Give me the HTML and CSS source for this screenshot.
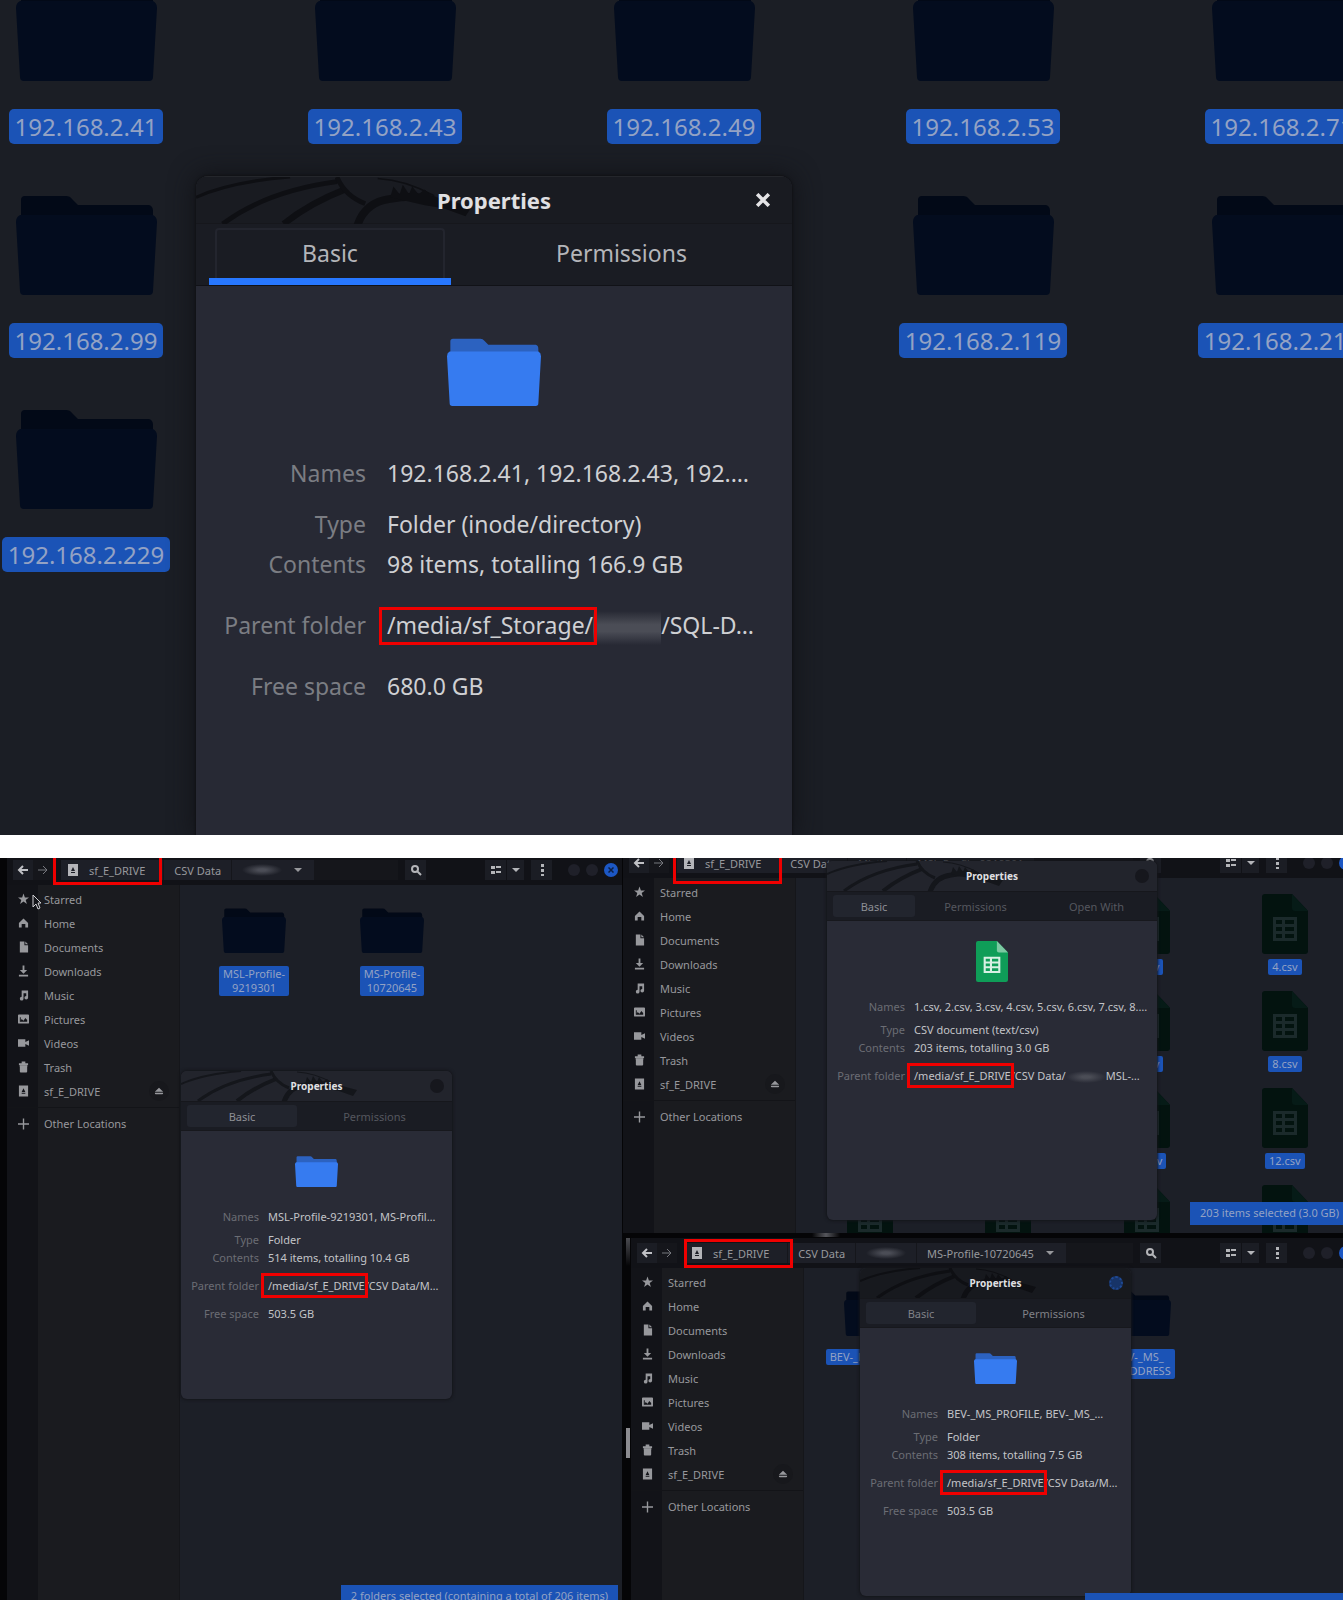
FILE: index.html
```html
<!DOCTYPE html>
<html lang="en">
<head>
<meta charset="utf-8">
<meta name="viewport" content="width=device-width, initial-scale=1">
<title>Properties</title>
<link rel="stylesheet" href="styles.css">
</head>
<body>
<svg class="sprite" aria-hidden="true">
  <symbol id="folder" viewBox="0 0 141 100" preserveAspectRatio="none">
    <path class="folder-back" d="M5 24V5Q5 1 9 1H50Q54 1 56 4L62 10H133Q137 11 137 16V24Z"/>
    <path class="folder-front" d="M4 20H137Q141 22 141 27L137 96Q137 100 133 100H8Q4 100 4 96L0 27Q0 22 4 20Z"/>
  </symbol>
  <symbol id="sheet" viewBox="0 0 46 60" preserveAspectRatio="none">
    <path class="sheet-page" d="M3 0H30L46 17V57Q46 60 43 60H3Q0 60 0 57V3Q0 0 3 0Z"/>
    <path class="sheet-fold" d="M30 0L46 17H33Q30 17 30 14Z"/>
    <path class="sheet-grid" fill-rule="evenodd" d="M11 23H35V47H11ZM14 26V30H20V26ZM23 26V30H32V26ZM14 33V37H20V33ZM23 33V37H32V33ZM14 40V44H20V40ZM23 40V44H32V40Z"/>
  </symbol>
  <symbol id="dragon" viewBox="0 0 180 30">
    <g fill="none" stroke="currentColor">
      <path stroke-width="2" d="M0 13Q22 3 60 0"/>
      <path stroke-width="3" d="M17 30Q45 9 90 3"/>
      <path stroke-width="4" d="M56 30Q72 17 95 8"/>
      <path stroke-width="3" d="M90 0Q95 12 108 17"/>
      <path stroke-width="5" d="M103 31Q108 16 124 14Q140 11 152 15"/>
      <path stroke-width="1" d="M116 1Q134 2 152 12"/>
    </g>
    <path fill="currentColor" d="M124 13L126 6L130 11L132 5L136 11L138 6L142 11L146 8L150 12L176 19L172 25L158 20L146 18Z"/>
  </symbol>
  <symbol id="back" viewBox="0 0 12 12"><path d="M11 6H2M6 2L2 6L6 10" fill="none" stroke="currentColor" stroke-width="2"/></symbol>
  <symbol id="forward" viewBox="0 0 12 12"><path d="M1 6H10M6 2L10 6L6 10" fill="none" stroke="currentColor" stroke-width="1"/></symbol>
  <symbol id="caret" viewBox="0 0 12 12"><path d="M2 4H10L6 8Z" fill="currentColor"/></symbol>
  <symbol id="search" viewBox="0 0 12 12"><path d="M7 7L11 11M8 5A3 3 0 1 1 2 5A3 3 0 1 1 8 5Z" fill="none" stroke="currentColor" stroke-width="2"/></symbol>
  <symbol id="listview" viewBox="0 0 12 12"><path d="M1 2H5V5H1ZM1 7H5V10H1ZM6 2H11V4H6ZM6 7H11V9H6Z" fill="currentColor"/></symbol>
  <symbol id="dots" viewBox="0 0 12 12"><path d="M5 0H8V3H5ZM5 5H8V8H5ZM5 10H8V12H5Z" fill="currentColor"/></symbol>
  <symbol id="cross" viewBox="0 0 12 12"><path d="M1 1L11 11M11 1L1 11" fill="none" stroke="currentColor" stroke-width="3"/></symbol>
  <symbol id="star" viewBox="0 0 12 12"><path d="M6 0L7.5 4.3H12L8.400 7L9.700 11.500L6 8.800L2.300 11.500L3.600 7L0 4.300H4.500Z" fill="currentColor"/></symbol>
  <symbol id="home" viewBox="0 0 12 12"><path d="M6 1L11 6V11H8V7H4V11H1V6Z" fill="currentColor"/></symbol>
  <symbol id="document" viewBox="0 0 12 12"><path d="M2 0H7V4H11V12H2ZM8 0L11 3H8Z" fill="currentColor"/></symbol>
  <symbol id="download" viewBox="0 0 12 12"><path d="M5 0H7V5H10L6 9L2 5H5ZM1 10H11V12H1Z" fill="currentColor"/></symbol>
  <symbol id="music" viewBox="0 0 12 12"><path d="M4 1H11V9A2 2 0 1 1 9 7V4H6V10A2 2 0 1 1 4 8Z" fill="currentColor"/></symbol>
  <symbol id="picture" viewBox="0 0 12 12"><path fill-rule="evenodd" d="M1 1H11Q12 1 12 2V10Q12 11 11 11H1Q0 11 0 10V2Q0 1 1 1ZM2 4V9H10V7L8 5L6 8L4 6L3 8V4Z" fill="currentColor"/></symbol>
  <symbol id="video" viewBox="0 0 12 12"><path d="M0 2H8V5L12 3V9L8 7V10H0Z" fill="currentColor"/></symbol>
  <symbol id="trash" viewBox="0 0 12 12"><path d="M1 2H4V0H8V2H11V4H1ZM2 5H10V11Q10 12 9 12H3Q2 12 2 11Z" fill="currentColor"/><path d="M2 4H10V6H2Z" fill="currentColor"/></symbol>
  <symbol id="drive" viewBox="0 0 12 12"><path fill-rule="evenodd" d="M1 0H11V12H1ZM4 8V9H8V8ZM4 7H8L6 3Z" fill="currentColor"/></symbol>
  <symbol id="plus" viewBox="0 0 12 12"><path d="M6 0V12M0 6H12" fill="none" stroke="currentColor" stroke-width="1.500"/></symbol>
  <symbol id="eject" viewBox="0 0 12 12"><path d="M6 2L11 7H1ZM1 8H11V10H1Z" fill="currentColor"/></symbol>
</svg>

<main class="page">
<section class="desk" aria-label="Storage folders">
  <ul class="hosts">
    <li class="host"><svg class="host-folder"><use href="#folder"/></svg><span class="tag">192.168.2.41</span></li>
    <li class="host"><svg class="host-folder"><use href="#folder"/></svg><span class="tag">192.168.2.43</span></li>
    <li class="host"><svg class="host-folder"><use href="#folder"/></svg><span class="tag">192.168.2.49</span></li>
    <li class="host"><svg class="host-folder"><use href="#folder"/></svg><span class="tag">192.168.2.53</span></li>
    <li class="host"><svg class="host-folder"><use href="#folder"/></svg><span class="tag">192.168.2.71</span></li>
    <li class="host"><svg class="host-folder"><use href="#folder"/></svg><span class="tag">192.168.2.99</span></li>
    <li class="host host--fourth"><svg class="host-folder"><use href="#folder"/></svg><span class="tag">192.168.2.119</span></li>
    <li class="host"><svg class="host-folder"><use href="#folder"/></svg><span class="tag">192.168.2.211</span></li>
    <li class="host"><svg class="host-folder"><use href="#folder"/></svg><span class="tag">192.168.2.229</span></li>
  </ul>
  <article class="dialog dialog--large">
    <header class="dialog-head"><svg class="dragon"><use href="#dragon"/></svg><h2>Properties</h2><button class="dialog-close" aria-label="Close"><svg><use href="#cross"/></svg></button></header>
    <nav class="tabs"><button class="tab tab--on">Basic</button><button class="tab">Permissions</button></nav>
    <div class="dialog-body">
      <svg class="dialog-icon dialog-icon--folder"><use href="#folder"/></svg>
      <dl class="props">
        <div class="row"><dt>Names</dt><dd>192.168.2.41, 192.168.2.43, 192.…</dd></div>
        <div class="row row--type"><dt>Type</dt><dd>Folder (inode/directory)</dd></div>
        <div class="row"><dt>Contents</dt><dd>98 items, totalling 166.9 GB</dd></div>
        <div class="row row--apart"><dt>Parent folder</dt><dd><span class="marked">/media/sf_Storage/</span><span class="smudge"></span>/SQL-D…</dd></div>
        <div class="row row--apart"><dt>Free space</dt><dd>680.0 GB</dd></div>
      </dl>
    </div>
  </article>
</section>

<section class="captures">
  <div class="left">
    <article class="window window--left">
      <header class="bar">
        <button class="nav" aria-label="Back"><svg><use href="#back"/></svg></button><button class="nav nav--off" aria-label="Forward"><svg><use href="#forward"/></svg></button>
        <div class="path"><button class="crumb crumb--drive"><svg><use href="#drive"/></svg>sf_E_DRIVE</button><button class="crumb">CSV Data</button><button class="crumb crumb--last" aria-label="Folder"><span class="smudge"></span><svg><use href="#caret"/></svg></button></div>
        <button class="tool tool--search" aria-label="Search"><svg><use href="#search"/></svg></button>
        <button class="tool" aria-label="View"><svg><use href="#listview"/></svg></button><button class="tool tool--caret" aria-label="View options"><svg><use href="#caret"/></svg></button><button class="tool tool--menu" aria-label="Menu"><svg><use href="#dots"/></svg></button>
        <button class="dot" aria-label="Minimise"></button><button class="dot" aria-label="Maximise"></button><button class="dot dot--close" aria-label="Close"><svg><use href="#cross"/></svg></button>
        <span class="frame"></span>
      </header>
      <div class="split">
        <ul class="places">
          <li><svg><use href="#star"/></svg>Starred</li>
          <li><svg><use href="#home"/></svg>Home</li>
          <li><svg><use href="#document"/></svg>Documents</li>
          <li><svg><use href="#download"/></svg>Downloads</li>
          <li><svg><use href="#music"/></svg>Music</li>
          <li><svg><use href="#picture"/></svg>Pictures</li>
          <li><svg><use href="#video"/></svg>Videos</li>
          <li><svg><use href="#trash"/></svg>Trash</li>
          <li><svg><use href="#drive"/></svg>sf_E_DRIVE<svg class="eject"><use href="#eject"/></svg></li>
          <li class="other"><svg><use href="#plus"/></svg>Other Locations</li>
        </ul>
        <div class="files">
          <ul class="folders">
            <li><svg class="small-folder"><use href="#folder"/></svg><span class="tag">MSL-Profile-<br>9219301</span></li>
            <li><svg class="small-folder"><use href="#folder"/></svg><span class="tag">MS-Profile-<br>10720645</span></li>
          </ul>
          <article class="dialog dialog--msl">
            <header class="dialog-head"><svg class="dragon"><use href="#dragon"/></svg><h2>Properties</h2><button class="dialog-close" aria-label="Close"></button></header>
            <nav class="tabs"><button class="tab tab--on">Basic</button><button class="tab">Permissions</button></nav>
            <div class="dialog-body">
              <svg class="dialog-icon dialog-icon--folder"><use href="#folder"/></svg>
              <dl class="props">
                <div class="row"><dt>Names</dt><dd>MSL-Profile-9219301, MS-Profil…</dd></div>
                <div class="row row--type"><dt>Type</dt><dd>Folder</dd></div>
                <div class="row"><dt>Contents</dt><dd>514 items, totalling 10.4 GB</dd></div>
                <div class="row row--apart"><dt>Parent folder</dt><dd><span class="marked">/media/sf_E_DRIVE</span>/CSV Data/M…</dd></div>
                <div class="row row--apart"><dt>Free space</dt><dd>503.5 GB</dd></div>
              </dl>
            </div>
          </article>
          <p class="status">2 folders selected (containing a total of 206 items)</p>
        </div>
      </div>
      <svg class="pointer" viewBox="0 0 10 16"><path d="M1 1V13L4 10L6 15L8 14L6 9H9Z" fill="#14151a" stroke="#d0d0d4" stroke-width="1"/></svg>
    </article>
  </div>

  <div class="right">
    <div class="slot">
    <article class="window window--csv">
      <header class="bar">
        <button class="nav" aria-label="Back"><svg><use href="#back"/></svg></button><button class="nav nav--off" aria-label="Forward"><svg><use href="#forward"/></svg></button>
        <div class="path"><button class="crumb crumb--drive"><svg><use href="#drive"/></svg>sf_E_DRIVE</button><button class="crumb">CSV Data</button><button class="crumb">Mistino</button><button class="crumb">MSL-Profile-9219301</button></div>
        <button class="tool tool--search" aria-label="Search"><svg><use href="#search"/></svg></button>
        <button class="tool" aria-label="View"><svg><use href="#listview"/></svg></button><button class="tool tool--caret" aria-label="View options"><svg><use href="#caret"/></svg></button><button class="tool tool--menu" aria-label="Menu"><svg><use href="#dots"/></svg></button>
        <button class="dot" aria-label="Minimise"></button><button class="dot" aria-label="Maximise"></button><button class="dot dot--close" aria-label="Close"><svg><use href="#cross"/></svg></button>
        <span class="frame"></span>
      </header>
      <div class="split">
        <ul class="places">
          <li><svg><use href="#star"/></svg>Starred</li>
          <li><svg><use href="#home"/></svg>Home</li>
          <li><svg><use href="#document"/></svg>Documents</li>
          <li><svg><use href="#download"/></svg>Downloads</li>
          <li><svg><use href="#music"/></svg>Music</li>
          <li><svg><use href="#picture"/></svg>Pictures</li>
          <li><svg><use href="#video"/></svg>Videos</li>
          <li><svg><use href="#trash"/></svg>Trash</li>
          <li><svg><use href="#drive"/></svg>sf_E_DRIVE<svg class="eject"><use href="#eject"/></svg></li>
          <li class="other"><svg><use href="#plus"/></svg>Other Locations</li>
        </ul>
        <div class="files">
          <ul class="sheets">
            <li><svg><use href="#sheet"/></svg><span class="tag">1.csv</span></li>
            <li><svg><use href="#sheet"/></svg><span class="tag">2.csv</span></li>
            <li><svg><use href="#sheet"/></svg><span class="tag">3.csv</span></li>
            <li><svg><use href="#sheet"/></svg><span class="tag">4.csv</span></li>
            <li><svg><use href="#sheet"/></svg><span class="tag">5.csv</span></li>
            <li><svg><use href="#sheet"/></svg><span class="tag">6.csv</span></li>
            <li><svg><use href="#sheet"/></svg><span class="tag">7.csv</span></li>
            <li><svg><use href="#sheet"/></svg><span class="tag">8.csv</span></li>
            <li><svg><use href="#sheet"/></svg><span class="tag">9.csv</span></li>
            <li><svg><use href="#sheet"/></svg><span class="tag">10.csv</span></li>
            <li><svg><use href="#sheet"/></svg><span class="tag">11.csv</span></li>
            <li><svg><use href="#sheet"/></svg><span class="tag">12.csv</span></li>
            <li><svg><use href="#sheet"/></svg></li>
            <li><svg><use href="#sheet"/></svg></li>
            <li><svg><use href="#sheet"/></svg></li>
            <li><svg><use href="#sheet"/></svg></li>
          </ul>
          <p class="status">203 items selected (3.0 GB)</p>
        </div>
      </div>
      <article class="dialog dialog--csv">
        <header class="dialog-head"><svg class="dragon"><use href="#dragon"/></svg><h2>Properties</h2><button class="dialog-close" aria-label="Close"></button></header>
        <nav class="tabs"><button class="tab tab--on">Basic</button><button class="tab">Permissions</button><button class="tab">Open With</button></nav>
        <div class="dialog-body">
          <svg class="dialog-icon dialog-icon--sheet"><use href="#sheet"/></svg>
          <dl class="props">
            <div class="row"><dt>Names</dt><dd>1.csv, 2.csv, 3.csv, 4.csv, 5.csv, 6.csv, 7.csv, 8.…</dd></div>
            <div class="row row--type"><dt>Type</dt><dd>CSV document (text/csv)</dd></div>
            <div class="row"><dt>Contents</dt><dd>203 items, totalling 3.0 GB</dd></div>
            <div class="row row--apart"><dt>Parent folder</dt><dd><span class="marked">/media/sf_E_DRIVE</span>/CSV Data/<span class="smudge"></span>MSL-…</dd></div>
          </dl>
        </div>
      </article>
    </article>
    </div>

    <div class="slot slot--lower">
    <article class="window window--bev">
      <header class="bar">
        <button class="nav" aria-label="Back"><svg><use href="#back"/></svg></button><button class="nav nav--off" aria-label="Forward"><svg><use href="#forward"/></svg></button>
        <div class="path"><button class="crumb crumb--drive"><svg><use href="#drive"/></svg>sf_E_DRIVE</button><button class="crumb">CSV Data</button><button class="crumb crumb--hidden" aria-label="Folder"><span class="smudge"></span></button><button class="crumb crumb--last">MS-Profile-10720645<svg><use href="#caret"/></svg></button></div>
        <button class="tool tool--search" aria-label="Search"><svg><use href="#search"/></svg></button>
        <button class="tool" aria-label="View"><svg><use href="#listview"/></svg></button><button class="tool tool--caret" aria-label="View options"><svg><use href="#caret"/></svg></button><button class="tool tool--menu" aria-label="Menu"><svg><use href="#dots"/></svg></button>
        <button class="dot" aria-label="Minimise"></button><button class="dot" aria-label="Maximise"></button><button class="dot dot--close" aria-label="Close"><svg><use href="#cross"/></svg></button>
        <span class="frame"></span>
      </header>
      <div class="split">
        <ul class="places">
          <li><svg><use href="#star"/></svg>Starred</li>
          <li><svg><use href="#home"/></svg>Home</li>
          <li><svg><use href="#document"/></svg>Documents</li>
          <li><svg><use href="#download"/></svg>Downloads</li>
          <li><svg><use href="#music"/></svg>Music</li>
          <li><svg><use href="#picture"/></svg>Pictures</li>
          <li><svg><use href="#video"/></svg>Videos</li>
          <li><svg><use href="#trash"/></svg>Trash</li>
          <li><svg><use href="#drive"/></svg>sf_E_DRIVE<svg class="eject"><use href="#eject"/></svg></li>
          <li class="other"><svg><use href="#plus"/></svg>Other Locations</li>
        </ul>
        <div class="files">
          <ul class="folders folders--wide">
            <li><svg class="small-folder"><use href="#folder"/></svg><span class="tag">BEV-_MS_PROFILE</span></li>
            <li><svg class="small-folder"><use href="#folder"/></svg><span class="tag">BEV-_MS_<br>IP_ADDRESS</span></li>
          </ul>
          <article class="dialog dialog--bev">
            <header class="dialog-head"><svg class="dragon"><use href="#dragon"/></svg><h2>Properties</h2><button class="dialog-close" aria-label="Close"></button></header>
            <nav class="tabs"><button class="tab tab--on">Basic</button><button class="tab">Permissions</button></nav>
            <div class="dialog-body">
              <svg class="dialog-icon dialog-icon--folder"><use href="#folder"/></svg>
              <dl class="props">
                <div class="row"><dt>Names</dt><dd>BEV-_MS_PROFILE, BEV-_MS_…</dd></div>
                <div class="row row--type"><dt>Type</dt><dd>Folder</dd></div>
                <div class="row"><dt>Contents</dt><dd>308 items, totalling 7.5 GB</dd></div>
                <div class="row row--apart"><dt>Parent folder</dt><dd><span class="marked">/media/sf_E_DRIVE</span>/CSV Data/M…</dd></div>
                <div class="row row--apart"><dt>Free space</dt><dd>503.5 GB</dd></div>
              </dl>
            </div>
          </article>
          <p class="status status--bare"></p>
        </div>
      </div>
    </article>
    </div>
  </div>
</section>
</main>
</body>
</html>
```
FILE: styles.css
```css
* { box-sizing: border-box; }

body {
  margin: 0;
  background: #fff;
  color: #97989c;
  font-family: "Noto Sans", "Open Sans", sans-serif;
  font-size: 11px;
}

ul, dl, dd, h2, p { margin: 0; padding: 0; }
ul { list-style: none; }
button { padding: 0; border: 0; background: none; color: inherit; font: inherit; }
svg { display: block; flex: none; }

.sprite { position: absolute; width: 0; height: 0; }

.page {
  display: flex;
  flex-direction: column;
  gap: 23px;
  min-height: 100vh;
}

.folder-back { fill: var(--folder-back, #020917); }
.folder-front { fill: var(--folder-front, #030c1e); }
.sheet-page { fill: var(--sheet, #03130f); }
.sheet-fold { fill: var(--sheet-fold, #061b17); }
.sheet-grid { fill: var(--sheet-grid, #1b2a2b); }

.tag {
  border-radius: 2px;
  background: #1b53b6;
  color: #93a2c4;
  text-align: center;
  white-space: nowrap;
}

/* Storage desk */

.desk {
  display: grid;
  overflow: hidden;
  background: #1b1e25;
}

.hosts {
  grid-area: 1 / 1;
  display: grid;
  grid-template-columns: repeat(4, minmax(172px, 1fr)) 147px;
  grid-auto-rows: 214px;
  align-content: start;
  margin-top: -19px;
}

.host {
  display: flex;
  flex-direction: column;
  align-items: center;
  gap: 28px;
  width: 172px;
}
.host--fourth { grid-column: 4; }
.host-folder { width: 141px; height: 100px; }
.host .tag {
  padding: 0 6px;
  border-radius: 5px;
  font-size: 24px;
  line-height: 35px;
}

/* Properties dialog */

.dialog {
  --row: 18px;
  display: flex;
  flex-direction: column;
  overflow: hidden;
  width: 271px;
  height: 328px;
  border-radius: 6px;
  background: #292b36;
  box-shadow: 0 0 3px 1px #14151a;
}

.dialog-head {
  position: relative;
  display: flex;
  align-items: center;
  justify-content: center;
  height: 31px;
  border-bottom: 1px solid #16171c;
  background: #22242c;
}
.dialog-head h2 {
  position: relative;
  color: #e0e0e3;
  font-size: 10px;
  font-weight: 700;
}
.dragon {
  position: absolute;
  top: 0;
  left: 0;
  width: 180px;
  height: 30px;
  color: #14161b;
}
.dialog-close {
  position: absolute;
  right: 8px;
  width: 14px;
  height: 14px;
  border-radius: 50%;
  background: #16171d;
}

.tabs {
  display: flex;
  height: 29px;
  padding: 3px 0 3px 6px;
  border-bottom: 1px solid #17181d;
  background: #1a1c23;
}
.tab { flex: 1; color: #55575f; }
.tab--on {
  flex: 0 0 110px;
  border-radius: 3px;
  background: #22252e;
  color: #8e8f95;
}

.dialog-body { padding: 25px 0 0; }
.dialog-icon { margin: 0 auto 21px; }
.dialog-icon--folder {
  --folder-back: #2c62c0;
  --folder-front: #367bf0;
  width: 43px;
  height: 31px;
}
.dialog-icon--sheet {
  --sheet: #0f9d58;
  --sheet-fold: #7cc9a2;
  --sheet-grid: #d8f0e4;
  width: 32px;
  height: 41px;
}

.row {
  display: grid;
  grid-template-columns: 78px 1fr;
  column-gap: 9px;
  line-height: var(--row);
  white-space: nowrap;
}
.row--type { margin-top: 5px; }
.row--apart { margin-top: 10px; }
.row dt { color: #6b6d74; text-align: right; }
.row dd { color: #c3c4c8; }

.marked { position: relative; }
.marked::after {
  content: "";
  position: absolute;
  inset: -5px -3px -5px -7px;
  border: 3px solid #f00000;
}

.smudge {
  display: inline-block;
  width: 40px;
  height: 12px;
  background: radial-gradient(closest-side, #4b4d56 20%, transparent);
  vertical-align: middle;
}

.dialog--large {
  --row: 40px;
  grid-area: 1 / 1;
  width: 596px;
  height: auto;
  margin: 176px 0 0 196px;
  border-radius: 12px 12px 0 0;
  background: #272934;
  box-shadow: 0 0 24px 2px #121317, 0 0 2px 1px #111216;
  font-size: 23px;
  z-index: 1;
}
.dialog--large .dialog-head {
  height: 48px;
  border-top: 1px solid #24262b;
  background: #191b21;
}
.dialog--large h2 { font-size: 22px; }
.dialog--large .dragon { width: 282px; height: 47px; color: #0e0f13; }
.dialog--large .dialog-close {
  right: 22px;
  width: 14px;
  height: 14px;
  background: none;
  color: #e4e4e6;
}
.dialog--large .dialog-close svg { width: 14px; height: 14px; }
.dialog--large .tabs { height: 62px; padding: 4px 0 0 13px; border-bottom: 1px solid #111217; }
.dialog--large .tab { padding-bottom: 8px; color: #b4b5b9; }
.dialog--large .tab--on {
  position: relative;
  flex: 0 0 242px;
  border-radius: 0;
  background: none;
  color: #b4b5b9;
}
.dialog--large .tab--on::before {
  content: "";
  position: absolute;
  inset: 0 6px 7px;
  border: 2px solid #23252e;
  border-bottom: 0;
  border-radius: 4px 4px 0 0;
}
.dialog--large .tab--on::after {
  content: "";
  position: absolute;
  inset: auto 0 0;
  height: 7px;
  background: #2777ff;
}
.dialog--large .dialog-body { padding: 52px 0 129px; }
.dialog--large .dialog-icon { width: 94px; height: 68px; margin-bottom: 47px; }
.dialog--large .row { grid-template-columns: 170px 1fr; column-gap: 21px; }
.dialog--large .row--type { margin-top: 11px; }
.dialog--large .row--apart { margin-top: 21px; }
.dialog--large dt { color: #7b7d83; }
.dialog--large dd { color: #cfd0d3; }
.dialog--large .marked::after { inset: -2px -4px -4px -8px; }
.dialog--large .smudge {
  width: 68px;
  height: 34px;
  background: linear-gradient(transparent, #4b4d56 40%, #4b4d56 60%, transparent);
}

/* File manager captures */

.captures {
  flex: 1;
  display: grid;
  grid-template-columns: minmax(0, 622fr) minmax(0, 721fr);
  overflow: hidden;
  background: #050507;
}

.left { display: flex; overflow: hidden; padding-left: 7px; }
.right { display: grid; grid-template-rows: 375px 1fr; overflow: hidden; }
.slot { display: flex; overflow: hidden; padding-left: 1px; }
.slot--lower {
  padding: 5px 0 0 9px;
  background:
    linear-gradient(#8b8b90, #8b8b90) 4px 195px / 4px 30px no-repeat,
    linear-gradient(#4a4b50, transparent) 4px 5px / 4px 28px no-repeat,
    linear-gradient(90deg, transparent, #55565c, transparent) 190px 0 / 28px 4px no-repeat;
}

.window {
  position: relative;
  display: flex;
  flex: 1;
  flex-direction: column;
  min-width: 0;
}
.window--left { margin-top: -3px; }
.window--csv { margin: -10px -14px 0 0; }
.window--bev { margin-right: -14px; }

.bar {
  position: relative;
  display: flex;
  align-items: center;
  height: 30px;
  padding: 0 4px 0 6px;
  background: #111217;
}
.bar svg { width: 12px; height: 12px; }
.nav {
  display: grid;
  place-items: center;
  width: 20px;
  height: 20px;
  background: #1b1d24;
  color: #c0c1c5;
}
.nav--off { background: #15161b; color: #77787e; }
.path {
  display: flex;
  flex: 1;
  overflow: hidden;
  height: 20px;
  margin: 0 7px 0 8px;
  background: #15161b;
}
.crumb {
  display: flex;
  align-items: center;
  padding: 0 10px;
  border-right: 1px solid #15161b;
  background: #1d1f27;
  white-space: nowrap;
}
.crumb--drive { gap: 10px; padding: 0 18px 0 6px; }
.crumb--drive svg { color: #b4b5b9; }
.crumb--last { gap: 10px; }
.tool {
  display: grid;
  place-items: center;
  width: 21px;
  height: 20px;
  background: #1b1d24;
  color: #b4b5b9;
}
.tool--search { margin-right: 59px; }
.tool--caret { width: 17px; margin-left: 1px; }
.tool--menu { margin: 0 16px 0 7px; }
.dot {
  width: 12px;
  height: 12px;
  margin-right: 6px;
  border-radius: 50%;
  background: #1f2029;
}
.dot--close {
  display: grid;
  place-items: center;
  width: 14px;
  height: 14px;
  margin-right: 0;
  background: #1c57c4;
  color: #0c1f45;
}
.bar .dot--close svg { width: 6px; height: 6px; }

/* Red call-out round the drive crumb */
.frame {
  position: absolute;
  inset: 0 auto 0 46px;
  width: 109px;
  border: 3px solid #f00000;
}
.window--csv .frame { inset: 0 auto -6px 50px; }
.window--bev .frame { inset: 1px auto 0 53px; }

.split { display: flex; flex: 1; }
.places {
  flex: 0 0 173px;
  padding-top: 2px;
  border-right: 1px solid #15161a;
  background: linear-gradient(90deg, #121318 31px, #1a1b1f 31px);
}
.places li {
  display: flex;
  align-items: center;
  gap: 15px;
  height: 24px;
  padding: 0 14px 0 11px;
}
.places svg { width: 11px; height: 12px; }
.places .eject {
  width: 20px;
  height: 20px;
  margin: 0 -4px 0 auto;
  padding: 5px;
  border-radius: 50%;
  background: #17181c;
}
.places .other {
  height: 32px;
  margin-top: 4px;
  border-top: 1px solid #131418;
}

.files {
  position: relative;
  flex: 1;
  min-width: 0;
  background: #1c1f27;
}

.folders { display: flex; padding: 23px 0 0 5px; }
.folders li {
  display: flex;
  flex-direction: column;
  align-items: center;
  gap: 13px;
  width: 138px;
}
.small-folder { width: 64px; height: 45px; }
.folders .tag, .sheets .tag { padding: 1px 4px; line-height: 14px; }
.folders--wide { padding-left: 3px; }
.folders--wide li { margin-right: 125px; }

.sheets {
  display: grid;
  grid-template-columns: repeat(4, 1fr);
  grid-auto-rows: 97px;
  padding: 16px 3px 0 5px;
  height: 355px;
  overflow: hidden;
}
.sheets li { display: flex; flex-direction: column; align-items: center; gap: 5px; }
.sheets svg { width: 46px; height: 60px; }

.dialog--msl, .dialog--bev, .dialog--csv { position: absolute; }
.dialog--msl { top: 186px; left: 1px; }
.dialog--bev { top: 0; left: 56px; }
.dialog--csv { top: 13px; left: 204px; width: 330px; height: 359px; }
.dialog--csv .tab--on { flex-basis: 82px; }
.dialog--csv .dialog-icon { margin: -5px auto 16px; }
.dialog--bev .dialog-head { background: #17191e; }
.dialog--bev .dialog-close { border: 2px dotted #1f4a96; background: #173468; }
.dialog--bev .dragon { color: #0e0f13; }
.dialog--bev .tab { color: #808187; }

.status {
  position: absolute;
  right: 4px;
  bottom: 0;
  height: 15px;
  padding: 0 10px;
  background: #1b53b6;
  color: #93a2c4;
  line-height: 22px;
  white-space: nowrap;
}
.window--csv .status { right: 8px; bottom: 8px; height: 23px; }
.status--bare { width: 272px; height: 7px; right: 0; }

.pointer { position: absolute; top: 39px; left: 25px; width: 10px; height: 16px; }
```
